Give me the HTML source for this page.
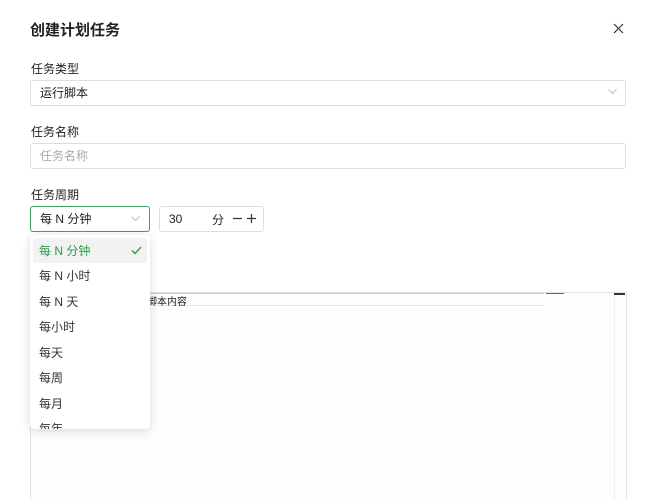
<!DOCTYPE html>
<html><head><meta charset="utf-8"><style>
*{box-sizing:border-box;margin:0;padding:0}
body{width:654px;height:499px;background:#fff;font-family:"Liberation Sans","Noto Sans CJK SC",sans-serif;color:#1f1f1f;position:relative;overflow:hidden}
.abs{position:absolute}
.lbl{font-size:12px;color:#222}
.inp{border:1px solid #dedede;border-radius:3px;background:#fff;font-size:12px;line-height:24px;padding-left:9px}
.item{position:absolute;left:3px;width:114px;height:25px;line-height:26px;padding-left:6px;font-size:12px;color:#333}
</style></head><body>
<div class="abs" style="left:30px;top:19px;font-size:15px;font-weight:bold;color:#222">创建计划任务</div>
<svg class="abs" style="left:613px;top:23px" width="11" height="11" viewBox="0 0 11 11"><path d="M1 1L10 10M10 1L1 10" stroke="#333" stroke-width="1.2"/></svg>
<div class="abs lbl" style="left:31px;top:60px">任务类型</div>
<div class="abs inp" style="left:30px;top:80px;width:596px;height:26px">运行脚本</div>
<svg class="abs" style="left:608px;top:89px" width="9" height="6"><path d="M.5 .5L4.5 4.5L8.5 .5" stroke="#bbb" fill="none"/></svg>
<div class="abs lbl" style="left:31px;top:123px">任务名称</div>
<div class="abs inp" style="left:30px;top:143px;width:596px;height:26px;color:#aaa">任务名称</div>
<div class="abs lbl" style="left:31px;top:186px">任务周期</div>
<div class="abs inp" style="left:30px;top:206px;width:120px;height:26px;border-color:#3fa45a">每 N 分钟</div>
<svg class="abs" style="left:131px;top:216px" width="9" height="6"><path d="M.5 .5L4.5 4.5L8.5 .5" stroke="#bbb" fill="none"/></svg>
<div class="abs inp" style="left:159px;top:206px;width:105px;height:26px">30</div>
<div class="abs" style="left:212px;top:211px;font-size:12px">分</div>
<svg class="abs" style="left:232px;top:213px" width="25" height="11"><path d="M1 5.5H10M15 5.5H24M19.5 1V10" stroke="#333" stroke-width="1.2"/></svg>
<div class="abs" style="left:30px;top:292px;width:597px;height:207px;background:#fdfdfb;border:1px solid #e2e2e2;border-bottom:none"></div>
<div class="abs" style="left:30px;top:293px;width:514px;height:1px;background:#ccc"></div>
<div class="abs" style="left:30px;top:305px;width:514px;height:1px;background:#e6e6e6"></div>
<div class="abs" style="left:546px;top:293px;width:18px;height:1px;background:#666"></div>
<div class="abs" style="left:614px;top:293px;width:11px;height:2px;background:#333"></div>
<div class="abs" style="left:614px;top:295px;width:1px;height:204px;background:#eee"></div>
<div class="abs" style="left:147px;top:293px;font-size:10px;color:#222">脚本内容</div>
<div class="abs" style="left:30px;top:235px;width:120px;height:194px;background:#fff;border-radius:4px;box-shadow:0 2px 10px rgba(0,0,0,.15);overflow:hidden">
<div class="item" style="top:3px;background:#f2f2f2;color:#2a9d48;border-radius:3px">每 N 分钟<svg style="position:absolute;right:5px;top:8px" width="11" height="9"><path d="M1 4.5L4 7.5L10 1" stroke="#2a9d48" stroke-width="1.3" fill="none"/></svg></div>
<div class="item" style="top:28px">每 N 小时</div>
<div class="item" style="top:54px">每 N 天</div>
<div class="item" style="top:79px">每小时</div>
<div class="item" style="top:105px">每天</div>
<div class="item" style="top:130px">每周</div>
<div class="item" style="top:156px">每月</div>
<div class="item" style="top:181px">每年</div>
</div>
</body></html>
